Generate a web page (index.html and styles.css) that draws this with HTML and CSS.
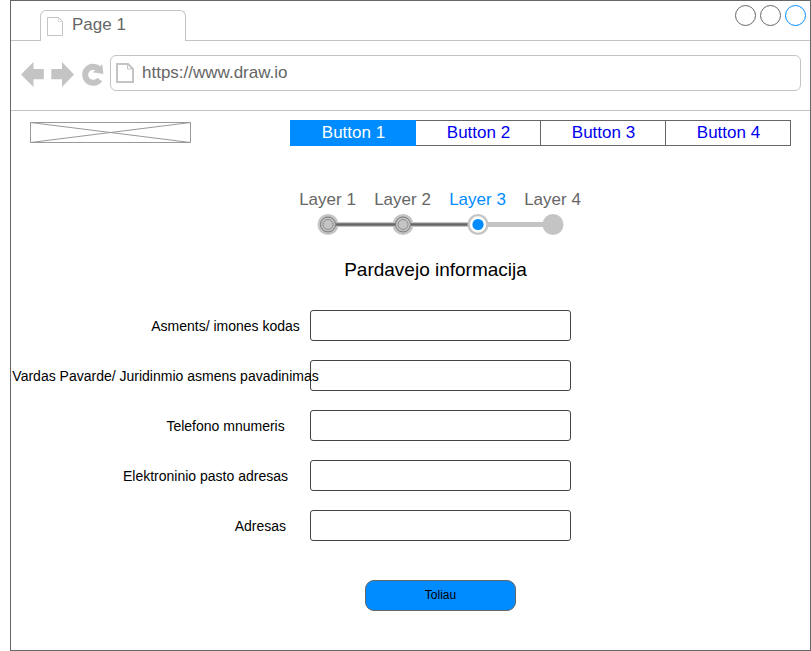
FILE: index.html
```html
<!DOCTYPE html>
<html lang="lt">
<head>
<meta charset="utf-8">
<title>Pardavejo informacija</title>
<link rel="stylesheet" href="styles.css">
</head>
<body>
<div class="window">
  <header class="tabbar">
    <div class="tab">
      <svg class="tab-icon" width="17" height="20" viewBox="0 0 17 20"><path d="M.5.5h11l4 4v14H.5z"/><path class="tab-fold" d="M11.500.5v4h4"/></svg>
      <span>Page 1</span>
    </div>
    <div class="tab-rest">
      <i class="dot"></i><i class="dot"></i><i class="dot dot-active"></i>
    </div>
  </header>
  <div class="toolbar">
    <svg class="nav" width="84" height="28" viewBox="0 0 84 28">
      <path d="M0 14.500 12.500 2V9H22.800V19.300H12.500V27zM53 14.500 41 2V9H30.300V19.300H41V27z"/>
      <path class="reload" d="M78.700 19.400A8 8 0 1 1 77.700 9"/>
      <path d="M81.300 4.300 82.400 14 71.600 12.300z"/>
    </svg>
    <div class="address">
      <svg class="page-icon" width="18" height="20" viewBox="0 0 18 20"><path d="M1 1h11l5 5v13H1z"/><path class="fold" d="M11.500 1v5h5"/></svg>
      <span>https://www.draw.io</span>
    </div>
  </div>
  <main>
    <div class="topline">
      <svg class="logo" width="161" height="21" viewBox="0 0 161 21"><path d="M.5.5h160v20H.5zL160.500 20.500M160.500.5.5 20.500"/></svg>
      <nav class="buttons">
        <a class="active">Button 1</a><a>Button 2</a><a>Button 3</a><a>Button 4</a>
      </nav>
    </div>
    <div class="steps">
      <span>Layer 1</span><span>Layer 2</span><span class="current">Layer 3</span><span>Layer 4</span>
    </div>
    <svg class="track" width="300" height="22" viewBox="0 0 300 22">
      <path class="rail" d="M38 11.500H263"/>
      <circle class="base" cx="38" cy="11.500" r="10.500"/>
      <circle class="base" cx="113" cy="11.500" r="10.500"/>
      <path class="done" d="M46 11.500H105.500M121 11.500H178"/>
      <g class="passed"><circle cx="38" cy="11.500" r="7.500"/><circle class="inner" cx="38" cy="11.500" r="5"/><circle cx="113" cy="11.500" r="7.500"/><circle class="inner" cx="113" cy="11.500" r="5"/></g>
      <circle class="ring" cx="188" cy="11.500" r="9.400"/><circle class="core" cx="188" cy="11.500" r="5.600"/>
      <circle class="base" cx="263" cy="11.500" r="10.500"/>
    </svg>
    <h1>Pardavejo informacija</h1>
    <form>
      <div class="row"><label class="code" for="f1">Asments/ imones kodas</label><input id="f1"></div>
      <div class="row"><label class="name" for="f2">Vardas Pavarde/ Juridinmio asmens pavadinimas</label><input id="f2"></div>
      <div class="row"><label class="phone" for="f3">Telefono mnumeris</label><input id="f3"></div>
      <div class="row"><label class="mail" for="f4">Elektroninio pasto adresas</label><input id="f4"></div>
      <div class="row"><label class="addr" for="f5">Adresas</label><input id="f5"></div>
      <button type="button">Toliau</button>
    </form>
  </main>
</div>
</body>
</html>
```
FILE: styles.css
```css
* { box-sizing: border-box; }
body { margin: 0; background: #fff; font-family: "Liberation Sans", Arial, sans-serif; font-size: 17px; color: #666; overflow: hidden; }
svg { display: block; fill: none; flex: none; overflow: visible; }
.window { width: 801px; height: 651px; margin-left: 10px; border: 1px solid #666; }
.tabbar { display: flex; height: 40px; }
.tabbar::before { content: ""; width: 29px; border-bottom: 1px solid #c4c4c4; }
.tab { display: flex; width: 146px; margin-top: 9px; padding: 6px 0 0 6px; border: 1px solid #c4c4c4; border-bottom: 0; border-radius: 6px 6px 0 0; line-height: 20px; }
.tab span { margin: -2px 0 0 8px; }
.tab-icon { stroke: #c4c4c4; }
.tab-fold { stroke-width: .6; }
.tab-rest { flex: 1; display: flex; justify-content: flex-end; gap: 4px; padding: 4px 4px 0 0; border-bottom: 1px solid #c4c4c4; }
.dot { width: 21px; height: 21px; border: 1px solid #666; border-radius: 50%; }
.dot-active { border-color: #008cff; }
.toolbar { display: flex; height: 70px; padding: 14px 9px 0 10px; border-bottom: 1px solid #c4c4c4; }
.nav { margin: 5px 5px 0 0; fill: #c4c4c4; }
.reload { fill: none; stroke: #c4c4c4; stroke-width: 6; }
.address { display: flex; flex: 1; height: 36px; padding: 8px 0 0 5px; border: 1px solid #c4c4c4; border-radius: 6px; line-height: 20px; }
.address span { margin: -1px 0 0 8px; }
.page-icon { margin-top: -1px; stroke: #c4c4c4; stroke-width: 2; }
.fold { stroke-width: 1; }
.topline { display: flex; justify-content: space-between; padding: 9px 19px 0; }
.logo { margin-top: 2px; stroke: #999; }
.buttons { display: grid; grid-template-columns: repeat(4, 125px); width: 501px; height: 26px; border: 1px solid #666; line-height: 23px; text-align: center; color: #0000f0; }
.buttons a { padding-left: 1px; border-right: 1px solid #666; }
.buttons a:last-child { margin-right: 1px; border-right: 0; }
.buttons .active { width: 126px; margin: -1px 0 -1px -1px; border: 0; padding: 1px 0 0 1px; background: #008cff; color: #fff; }
.steps { display: grid; grid-template-columns: repeat(4, 75px); margin: 44px 0 0 279px; line-height: 20px; text-align: center; }
.current { color: #008cff; }
.track { margin: 3px 0 0 279px; }
.rail { stroke: #c4c4c4; stroke-width: 5; }
.done { stroke: #666; stroke-width: 2.400; }
.base { fill: #c4c4c4; }
.passed { stroke: #777; }
.inner { stroke: #8c8c8c; }
.ring { fill: #fff; stroke: #c4c4c4; stroke-width: 2.300; }
.core { fill: #008cff; }
h1 { margin: 24px 0 0 279px; width: 291px; text-align: center; font-size: 19px; font-weight: 400; line-height: 22px; color: #000; }
form { margin-top: 29px; }
.row { display: flex; height: 31px; margin-bottom: 19px; }
label { position: relative; flex: none; width: 299px; font-size: 14px; line-height: 32px; text-align: right; white-space: nowrap; color: #000; }
.code { padding-right: 10.200px; }
.name { width: 308px; margin-right: -9px; padding-right: .3px; }
.phone { padding-right: 25.300px; }
.mail { padding-right: 22px; }
.addr { padding-right: 24px; }
input { width: 261px; height: 31px; padding: 0 8px; border: 1px solid #444; border-radius: 3px; background: transparent; }
button { display: block; width: 151px; height: 31px; margin: 39px 0 0 354px; padding: 0 0 2px; border: 1px solid #666; border-radius: 9px; background: #008cff; font: 12px "Liberation Sans", Arial, sans-serif; color: #000; }
```
